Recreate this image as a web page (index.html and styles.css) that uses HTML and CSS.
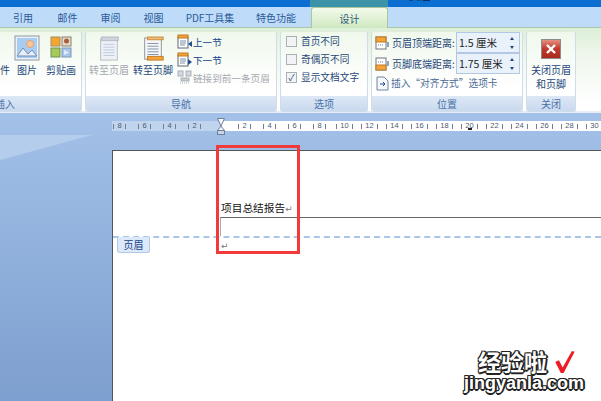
FILE: index.html
```html
<!DOCTYPE html>
<html lang="zh">
<head>
<meta charset="utf-8">
<title>页眉 - Microsoft Word</title>
<link rel="stylesheet" href="styles.css">
</head>
<body>
<div class="window">

<div class="titlebar">
  <span class="tool-tab-top"></span>
  <span class="title-text">页眉 - Microsoft Word</span>
</div>

<div class="tabs">
  <span class="tab tab-yin">引用</span>
  <span class="tab tab-mail">邮件</span>
  <span class="tab tab-review">审阅</span>
  <span class="tab tab-view">视图</span>
  <span class="tab tab-pdf">PDF工具集</span>
  <span class="tab tab-special">特色功能</span>
  <span class="tab tab-design">设计</span>
</div>

<div class="ribbon">
  <div class="group group-insert">
    <div class="group-body">
      <div class="bigbtn btn-part"><span class="clip-label">件</span></div>
      <div class="bigbtn btn-pic">
        <svg width="26" height="26" viewBox="0 0 26 26"><rect x="1" y="1" width="24" height="24" fill="#eef2f6" stroke="#8c98a6"/><rect x="3" y="3" width="20" height="20" fill="#a9cdf0"/><circle cx="16" cy="9" r="3.5" fill="#f6c89c" stroke="#e8a070"/><path d="M3 21 L9 13 L14 19 L18 15 L23 21 Z" fill="#e8eef6" stroke="#6d8db5"/></svg>
        <span>图片</span>
      </div>
      <div class="bigbtn btn-clip">
        <svg width="22" height="22" viewBox="0 0 22 22"><rect x="1" y="1" width="9" height="9" fill="#f2a72e" stroke="#a58a60"/><rect x="12" y="1" width="9" height="9" fill="#e8dcc8" stroke="#8a8070"/><circle cx="16.500" cy="5" r="2.500" fill="#a8603a"/><rect x="1" y="12" width="9" height="9" fill="#a6c95a" stroke="#6f8f50"/><rect x="12" y="12" width="9" height="9" fill="#a9c6ea" stroke="#7a94b8"/><path d="M14 14 L19 16.500 L14 19 Z" fill="#e4eefa"/></svg>
        <span>剪贴画</span>
      </div>
    </div>
    <div class="group-name"><span class="name-cut">插入</span></div>
  </div>

  <div class="group group-nav">
    <div class="group-body nav-body">
      <div class="bigbtn btn-go muted">
        <svg width="24" height="26" viewBox="0 0 26 28"><rect x="4" y="3" width="18" height="23" fill="#eef1f6" stroke="#b3bac4"/><rect x="5" y="1" width="18" height="4" fill="#ccd3dc" stroke="#b3bac4"/><path d="M7 9h12M7 12h12M7 15h12M7 18h12M7 21h12" stroke="#bcc8da"/></svg>
        <span>转至页眉</span>
      </div>
      <div class="bigbtn btn-go">
        <svg width="24" height="26" viewBox="0 0 26 28"><rect x="4" y="2" width="18" height="23" fill="#f6f7f9" stroke="#8b8f96"/><rect x="7" y="1" width="17" height="3" fill="#eebc78" stroke="#c98a3a"/><rect x="7" y="22" width="17" height="4" fill="#f2a33a" stroke="#c27a20"/><path d="M7 8h12M7 11h12M7 14h12M7 17h12M7 20h12" stroke="#7d8ea8"/></svg>
        <span>转至页脚</span>
      </div>
      <div class="nav-list">
        <div class="nav-row">
          <svg width="16" height="15" viewBox="0 0 16 15"><rect x="1" y="3" width="10" height="11" fill="#fff" stroke="#5d6672"/><rect x="1" y="1" width="10" height="3" fill="#f2a33a" stroke="#c27a20"/><path d="M3 7h6M3 9h6M3 11h5" stroke="#7d8ea8"/><path d="M15 7 L11 10 L15 13 Z" fill="#1e4f8f"/></svg>
          <span>上一节</span>
        </div>
        <div class="nav-row">
          <svg width="16" height="15" viewBox="0 0 16 15"><rect x="1" y="3" width="10" height="11" fill="#fff" stroke="#5d6672"/><rect x="1" y="1" width="10" height="3" fill="#f2a33a" stroke="#c27a20"/><path d="M3 7h6M3 9h6M3 11h5" stroke="#7d8ea8"/><path d="M11 7 L15 10 L11 13 Z" fill="#1e4f8f"/></svg>
          <span>下一节</span>
        </div>
        <div class="nav-row muted">
          <svg width="16" height="15" viewBox="0 0 16 15"><rect x="1" y="1" width="5" height="5" fill="#d6dae0" stroke="#a9afb8"/><rect x="9" y="1" width="5" height="5" fill="#d6dae0" stroke="#a9afb8"/><rect x="4" y="8" width="8" height="3" fill="#c8cdd4" stroke="#a9afb8"/><path d="M3 13h9" stroke="#a9afb8" stroke-dasharray="1 1"/></svg>
          <span>链接到前一条页眉</span>
        </div>
      </div>
    </div>
    <div class="group-name">导航</div>
  </div>

  <div class="group group-opts">
    <div class="group-body opts-body">
      <label class="opt"><span class="check"></span>首页不同</label>
      <label class="opt"><span class="check"></span>奇偶页不同</label>
      <label class="opt"><span class="check checked">✓</span>显示文档文字</label>
    </div>
    <div class="group-name">选项</div>
  </div>

  <div class="group group-pos">
    <div class="group-body pos-body">
      <div class="pos-row">
        <svg width="15" height="14" viewBox="0 0 15 14"><rect x="1" y="1" width="10" height="12" fill="#fff" stroke="#6e7580"/><rect x="1" y="1" width="10" height="5" fill="#f2a33a" stroke="#c27a20"/><path d="M3 9h6" stroke="#6e7580" stroke-dasharray="1 1"/><path d="M13 6v5" stroke="#1e4f8f"/></svg>
        <span class="pos-label">页眉顶端距离:</span>
        <span class="spin"><span class="spin-val">1.5 厘米</span><span class="spin-arrows"><i class="up"></i><i class="down"></i></span></span>
      </div>
      <div class="pos-row">
        <svg width="15" height="14" viewBox="0 0 15 14"><rect x="1" y="1" width="10" height="12" fill="#fff" stroke="#6e7580"/><rect x="1" y="8" width="10" height="5" fill="#f2a33a" stroke="#c27a20"/><path d="M3 5h6" stroke="#6e7580" stroke-dasharray="1 1"/><path d="M13 4v5" stroke="#1e4f8f"/></svg>
        <span class="pos-label">页脚底端距离:</span>
        <span class="spin"><span class="spin-val">1.75 厘米</span><span class="spin-arrows"><i class="up"></i><i class="down"></i></span></span>
      </div>
      <div class="pos-row pos-insert">
        <svg width="15" height="15" viewBox="0 0 15 15"><path d="M2 1h7l4 4v9H2Z" fill="#f6f8fb" stroke="#6e84a3"/><path d="M5 8h5M8 6l2 2-2 2" fill="none" stroke="#1e4f8f"/></svg>
        <span>插入“对齐方式”选项卡</span>
      </div>
    </div>
    <div class="group-name">位置</div>
  </div>

  <div class="group group-close">
    <div class="group-body close-body">
      <span class="close-icon"><svg width="12" height="10" viewBox="0 0 12 10"><path d="M2 1 L10 9 M10 1 L2 9" stroke="#fff" stroke-width="2.400"/></svg></span>
      <span class="close-text">关闭页眉<br>和页脚</span>
    </div>
    <div class="group-name">关闭</div>
  </div>
</div>

<div class="workspace">
  <div class="ruler-row">
    <div class="ruler">
      <span>8</span><span>6</span><span>4</span><span>2</span>
      <span class="zero"></span>
      <span>2</span><span>4</span><span>6</span><span>8</span><span>10</span><span>12</span><span>14</span><span>16</span><span>18</span><span>20</span><span>22</span><span>24</span><span>26</span><span>28</span><span>30</span>
    </div>
  </div>
  <div class="sheet">
    <div class="head-title">项目总结报告<span class="para">↵</span></div>
    <div class="head-rule"></div>
    <div class="head-sep"><span class="head-tag">页眉</span></div>
    <div class="para para-body">↵</div>
  </div>
  <span class="shine"></span>
  <span class="marker"></span>
  <svg class="indent-mark" width="8" height="17" viewBox="0 0 8 17"><path d="M0.500 0.500h7L4 8Z" fill="#f4f7fb" stroke="#6f8099"/><path d="M4 8L7.500 12.500h-7Z" fill="#f4f7fb" stroke="#6f8099"/><rect x="0.500" y="12.500" width="7" height="4" fill="#c9d6e8" stroke="#6f8099"/></svg>
  <span class="tab-stop"></span>
</div>

<div class="watermark">
  <div class="wm-top">经验啦<svg width="23" height="24" viewBox="0 0 24 26"><path d="M2 13 L6 11 L10 19 L20 1 L23 2 L11 25 L8 25 Z" fill="#ee1c25"/></svg></div>
  <div class="wm-url">jingyanla.com</div>
</div>

</div>
</body>
</html>
```

FILE: styles.css
```css
html, body {
    margin: 0;
    padding: 0;
}
body {
    font-family: "Noto Sans CJK SC", "Liberation Sans", sans-serif;
    font-size: 10px;
    color: #15428b;
}
.window {
    position: relative;
    width: 601px;
    height: 401px;
    overflow: hidden;
    background: #a0bde3;
}
svg {
    display: block;
    flex: none;
}

.titlebar {
    position: relative;
    height: 7px;
    background: #0a6fd0;
    overflow: hidden;
}
.tool-tab-top {
    position: absolute;
    left: 310px;
    top: 0;
    width: 78px;
    height: 7px;
    background: #3c93a8;
}
.title-text {
    position: absolute;
    left: 409px;
    top: -13px;
    font-size: 11px;
    color: #10243f;
}

.tabs {
    display: flex;
    height: 20px;
    background: #bfdbfa;
    border-bottom: 1px solid #aac6a8;
}
.tab {
    line-height: 22px;
    font-size: 10px;
    color: #2a5a96;
    text-align: center;
}
.tab-yin { width: 46px; }
.tab-mail { width: 43px; }
.tab-review { width: 43px; }
.tab-view { width: 43px; }
.tab-pdf { width: 70px; }
.tab-special { width: 60px; margin-left: 1px; }
.tab-design {
    width: 75px;
    margin-left: 5px;
    height: 20px;
    border: 1px solid #a8c89c;
    border-bottom: none;
    border-radius: 3px 3px 0 0;
    background: linear-gradient(#f4faec, #cfe8c0);
    color: #2a5a7a;
}

.ribbon {
    display: flex;
    gap: 3px;
    height: 85px;
    padding-top: 3px;
    box-sizing: border-box;
    background: linear-gradient(#dcefd8, #eef6ea 30%, #fff 90%);
    border-bottom: 2px solid #e6edf5;
}
.group {
    display: flex;
    flex-direction: column;
    height: 81px;
    box-sizing: border-box;
    border: 1px solid #cfdcea;
    border-top-color: #e0ecd8;
    border-radius: 3px;
    background: linear-gradient(#f0f8ec, #fff 70%);
    overflow: hidden;
}
.group-body {
    display: flex;
    flex: 1;
    min-height: 0;
}
.group-name {
    height: 15px;
    line-height: 15px;
    text-align: center;
    font-size: 10px;
    color: #4a73a8;
    background: linear-gradient(#dde8f6, #c9d9ee);
}
.group-insert {
    width: 83px;
    margin-left: -1px;
    border-left: none;
}
.group-nav { width: 192px; }
.group-opts { width: 88px; }
.group-pos { width: 152px; }
.group-close { width: 50px; }
.name-cut {
    display: block;
    width: 16px;
    overflow: hidden;
    white-space: nowrap;
    direction: rtl;
}

.bigbtn {
    display: flex;
    flex-direction: column;
    align-items: center;
    color: #26477a;
    font-size: 10px;
    line-height: 14px;
}
.btn-part {
    width: 12px;
    justify-content: flex-end;
    height: 45px;
}
.clip-label {
    display: block;
    width: 10px;
}
.btn-pic {
    width: 32px;
    padding-top: 3px;
    gap: 2px;
}
.btn-clip {
    width: 36px;
    padding-top: 4px;
    gap: 5px;
}
.nav-body {
    padding-left: 1px;
}
.btn-go {
    width: 44px;
    padding-top: 4px;
    gap: 1px;
    white-space: nowrap;
}
.muted {
    color: #a5a9b0;
}
.nav-list {
    display: flex;
    flex-direction: column;
    gap: 3px;
    padding: 2px 0 0 2px;
    font-size: 9.600px;
}
.nav-row {
    display: flex;
    align-items: center;
    height: 15px;
    white-space: nowrap;
}

.opts-body {
    flex-direction: column;
    gap: 4px;
    padding: 2px 0 0 5px;
}
.opt {
    display: flex;
    align-items: center;
    gap: 4px;
    height: 14px;
    font-size: 9.700px;
    white-space: nowrap;
    color: #26477a;
}
.check {
    width: 9px;
    height: 9px;
    border: 1px solid #a9b0b8;
    background: #f2f3f4;
    font-size: 9px;
    line-height: 9px;
    color: #2d4f85;
    text-align: center;
}

.pos-body {
    flex-direction: column;
    padding: 0 0 0 3px;
}
.pos-row {
    display: flex;
    align-items: center;
    gap: 2px;
    height: 21px;
    white-space: nowrap;
    color: #26477a;
}
.pos-label {
    width: 62px;
}
.spin {
    display: flex;
    align-items: center;
    justify-content: space-between;
    width: 64px;
    height: 21px;
    box-sizing: border-box;
    padding: 0 3px 0 2px;
    background: #e9f1fb;
    border: 1px solid #b3c8e4;
    font-size: 10.500px;
    color: #222;
}
.spin-arrows {
    display: flex;
    flex-direction: column;
    gap: 6px;
    padding-right: 2px;
}
.spin-arrows i {
    display: block;
    width: 0;
    height: 0;
    border-left: 2.500px solid transparent;
    border-right: 2.500px solid transparent;
}
.spin-arrows .up {
    border-bottom: 3px solid #26477a;
}
.spin-arrows .down {
    border-top: 3px solid #26477a;
}
.pos-insert {
    gap: 1px;
    height: 18px;
    font-size: 9.700px;
    color: #4a6a96;
}

.close-body {
    flex-direction: column;
    align-items: center;
    padding-top: 7px;
    gap: 4px;
}
.close-icon {
    display: flex;
    align-items: center;
    justify-content: center;
    width: 20px;
    height: 20px;
    box-sizing: border-box;
    border: 1px solid #8c8c8c;
    background: linear-gradient(#e68f80, #c0392b 50%, #a92a1c);
}
.close-text {
    text-align: center;
    line-height: 14px;
    color: #26477a;
    white-space: nowrap;
}

.workspace {
    position: relative;
    height: 288px;
    background: linear-gradient(#a3c1e8, #7d9fcf);
    padding-top: 8px;
    box-sizing: border-box;
}
.ruler-row {
    height: 10px;
    padding-left: 112px;
}
.ruler {
    display: flex;
    width: 489px;
    height: 10px;
    overflow: hidden;
    background: linear-gradient(90deg, #c0d4ee 108px, #fff 108px);
}
.ruler span {
    flex: none;
    display: flex;
    align-items: center;
    justify-content: center;
    gap: 3px;
    width: 25px;
    font-family: "Liberation Sans", sans-serif;
    font-size: 7.500px;
    line-height: 10px;
    color: #4a5a70;
}
.ruler span:first-child {
    margin-left: -5px;
}
.ruler span::before,
.ruler span::after {
    content: "";
    width: 1px;
    height: 5px;
    background: #6f7f94;
}
.ruler .zero::before,
.ruler .zero::after {
    display: none;
}

.sheet {
    position: relative;
    width: 489px;
    height: 251px;
    margin: 19px 0 0 112px;
    box-sizing: border-box;
    background: #fff;
    border-top: 1px solid #555;
    border-left: 1px solid #555;
    padding: 50px 0 0 108px;
}
.head-title {
    height: 14px;
    font-size: 10.700px;
    line-height: 14px;
    color: #111;
}
.para {
    color: #777;
    font-family: "DejaVu Sans", sans-serif;
    font-size: 9px;
}
.head-rule {
    height: 18px;
    margin: 2px 0 0 -1px;
    border-top: 1px solid #666;
    border-left: 1px solid #aaa;
}
.head-sep {
    position: relative;
    height: 0;
    margin: 0 0 0 -108px;
    border-top: 2px dashed #a9c6ea;
}
.head-tag {
    position: absolute;
    left: 4px;
    top: -1px;
    width: 33px;
    height: 16px;
    box-sizing: border-box;
    border: 1px solid #b3c8e4;
    border-top: none;
    border-radius: 0 0 3px 3px;
    background: #dce9f8;
    line-height: 15px;
    text-align: center;
    font-size: 10px;
    color: #15428b;
}
.para-body {
    margin: 1px 0 0 0;
    line-height: 14px;
}

.shine {
    position: absolute;
    left: 0;
    top: 22px;
    width: 92px;
    height: 25px;
    background: #b5cdec;
    clip-path: polygon(0 0, 100% 0, 0 100%);
}
.marker {
    position: absolute;
    left: 216px;
    top: 32px;
    width: 84px;
    height: 109px;
    box-sizing: border-box;
    border: 3px solid #f23a3a;
}
.indent-mark {
    position: absolute;
    left: 217px;
    top: 5px;
}
.tab-stop {
    position: absolute;
    left: 468px;
    top: 15px;
    width: 4px;
    height: 2px;
    background: #222;
}

.watermark {
    position: absolute;
    left: 462px;
    top: 349px;
    width: 124px;
    text-align: center;
    color: #fff;
    font-weight: bold;
    text-shadow: -1px -1px 0 #222, 1px -1px 0 #222, -1px 1px 0 #222, 1px 1px 0 #222, 0 2px 0 #222, 2px 0 0 #222;
}
.wm-top {
    display: flex;
    align-items: center;
    gap: 6px;
    padding-left: 16px;
    height: 25px;
    font-family: "Noto Sans CJK SC", sans-serif;
    font-size: 23px;
    line-height: 25px;
}
.wm-url {
    font-family: "Liberation Sans", sans-serif;
    font-size: 18px;
    line-height: 18px;
    white-space: nowrap;
}
```
